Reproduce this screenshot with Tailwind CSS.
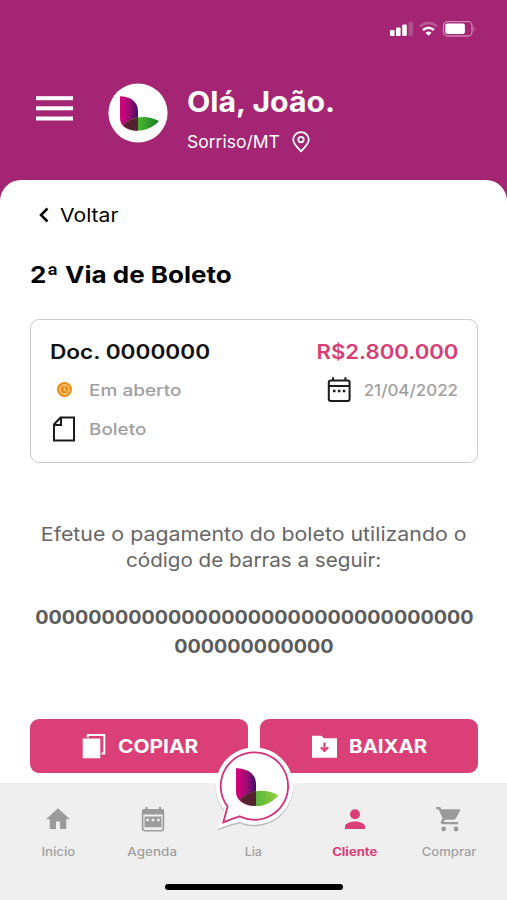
<!DOCTYPE html>
<html lang="pt-BR">
<head>
<meta charset="utf-8">
<meta name="viewport" content="width=device-width, initial-scale=1">
<title>2ª Via de Boleto</title>
<script src="https://cdn.jsdelivr.net/npm/@tailwindcss/browser@4"></script>
</head>
<body class="font-['Inter',sans-serif] bg-[#a32574]">
<div class="relative w-[507px] h-[900px] flex flex-col overflow-hidden whitespace-nowrap">
  <header class="h-[180px] shrink-0 flex flex-col text-white">
    <div class="h-[60px] pt-[20px] pr-[30px] flex justify-end">
      <svg class="w-[88px] h-[18px]" viewBox="0 0 88 18" fill="#fff">
        <rect x="1" y="10" width="4.6" height="6" rx="1"/><rect x="7" y="7.5" width="4.6" height="8.500" rx="1"/><rect x="13.200" y="4.500" width="4.600" height="11.500" rx="1"/><rect x="19.500" y="2" width="4.500" height="14" rx="1" opacity=".2"/>
        <g fill="none" stroke="#fff" stroke-width="2.500"><path d="M31 6.300Q39.500-.5 48 6.300" opacity=".25"/><path d="M34 10Q39.500 5.500 45 10"/></g>
        <path d="M36.500 12.700Q39.500 10.400 42.500 12.700L39.500 15.700z"/>
        <rect x="54.500" y="1.700" width="28.500" height="14.300" rx="4" fill="none" stroke="#fff" stroke-width="1.300" opacity=".45"/>
        <rect x="56.300" y="3.600" width="19.600" height="10.500" rx="2"/><path d="M84.500 6.500Q86.500 9 84.500 11.500z" opacity=".45"/>
      </svg>
    </div>
    <div class="flex pl-[36px]">
      <svg class="w-[37px] h-[25px] mt-[36px]" viewBox="0 0 37 25" fill="#fff"><rect y=".2" width="37" height="4"/><rect y="10.300" width="37" height="4"/><rect y="20.500" width="37" height="4"/></svg>
      <svg class="w-[60px] h-[60px] mt-[23px] ml-[35px]" viewBox="0 0 60 60">
        <defs>
          <linearGradient id="petal"><stop offset="0" stop-color="#d9007c"/><stop offset=".5" stop-color="#a40a73"/><stop offset="1" stop-color="#3d1069"/></linearGradient>
          <linearGradient id="leafDark"><stop offset="0" stop-color="#44a82c"/><stop offset=".5" stop-color="#45b02f"/><stop offset="1" stop-color="#167c28"/></linearGradient>
          <linearGradient id="leafLight"><stop offset=".4" stop-color="#58b53a"/><stop offset="1" stop-color="#94d03c"/></linearGradient>
        </defs>
        <circle cx="30" cy="30" r="29.600" fill="#fff"/>
        <path d="M12 13.300C21 13.300 30 18 30 28V47.500C19 48 12 43 12 35z" fill="url(#petal)"/>
        <path d="M15.500 42C24 34 37 31 51 38C44 45.500 36 48 29 47.500C23 47.500 18 45.500 15.500 42z" fill="url(#leafDark)"/>
        <path d="M15.500 42C20 38 25 35.600 30 35.100V47.500C23 47.500 18 45.500 15.500 42z" fill="#55202f"/>
      </svg>
      <div class="ml-[19px] mt-[24px]">
        <h1 class="text-[28px] leading-[36px] font-bold origin-left scale-x-[1.08]">Olá, João.</h1>
        <div class="flex items-center h-[24px] mt-[10px]">
          <span class="text-[17px] leading-[24px] w-[104px] origin-left scale-x-[1.03]">Sorriso/MT</span>
          <svg class="w-[20px] h-[22px]" viewBox="0 0 20 22" fill="none" stroke="#fff" stroke-width="1.800"><path d="M10 20.300C5 15.500 2.200 12 2.200 8.600a7.800 7.400 0 0 1 15.600 0C17.800 12 15 15.500 10 20.300z"/><circle cx="10" cy="8.600" r="2.700"/></svg>
        </div>
      </div>
    </div>
  </header>

  <main class="h-[603px] shrink-0 bg-white rounded-t-[21px] pl-[30px] pr-[29px] flex flex-col">
    <div class="mt-[23px] h-[24px] flex items-center pl-[8px] text-black">
      <svg class="w-[11px] h-[16px]" viewBox="0 0 11 16" fill="none" stroke="#000" stroke-width="2.500"><path d="M9.500 1.500L3 8L9.500 14.500"/></svg>
      <span class="ml-[11px] text-[18.500px] leading-[24px] origin-left scale-x-[1.14]">Voltar</span>
    </div>
    <h2 class="mt-[32px] text-[23px] leading-[32px] font-bold text-black origin-left scale-x-[1.13]">2ª Via de Boleto</h2>

    <section class="mt-[28px] h-[144px] rounded-[9px] border-[1.500px] border-[#cbcbcb] pl-[19px] pr-[19px] pt-[20px]">
      <div class="flex justify-between h-[24px] text-[20px] leading-[24px] font-semibold">
        <span class="text-[#111] origin-left scale-x-[1.13]">Doc. 0000000</span>
        <span class="text-[#d83e76] origin-right scale-x-[1.105]">R$2.800.000</span>
      </div>
      <div class="flex justify-between items-center mt-[14px] h-[24px] text-[16px] leading-[24px] font-medium text-[#a0a0a0]">
        <div class="flex items-center">
          <svg class="w-[39px] h-[24px]" viewBox="0 0 39 24" fill="none"><circle cx="14.500" cy="11.500" r="7.500" fill="#f08c14"/><circle cx="14.500" cy="11.500" r="4.600" stroke="#ffd9a0" stroke-width="1.100"/><path d="M14.300 8.800V11.800L16.400 13.300" stroke="#ffd9a0" stroke-width="1.100"/></svg>
          <span class="origin-left scale-x-[1.187]">Em aberto</span>
        </div>
        <div class="flex items-center">
          <svg class="w-[24px] h-[26px]" viewBox="0 0 24 26" fill="none" stroke="#1b1b1b" stroke-width="2"><rect x="1.800" y="3.500" width="20.800" height="20.500" rx="2"/><path d="M1.800 9H22.600M6 .3V4M18.400 .3V4"/><path d="M6 14H8.500M10.900 14H13.400M15.800 14H18.300" stroke-width="2.400"/></svg>
          <span class="ml-[18px] origin-right scale-x-[1.06]">21/04/2022</span>
        </div>
      </div>
      <div class="flex items-center mt-[15px] h-[24px] text-[16px] leading-[24px] font-medium text-[#a0a0a0]">
        <svg class="w-[39px] h-[26px]" viewBox="0 0 39 26" fill="none" stroke="#1b1b1b" stroke-width="2"><path d="M10.500 1.500H24V24.500H4V8.500z"/><path d="M11 1.500V9H4" /></svg>
        <span class="origin-left scale-x-[1.18]">Boleto</span>
      </div>
    </section>

    <div class="mt-[59px] flex flex-col items-center text-[19px] leading-[26px] text-[#666]">
      <span class="scale-x-[1.122]">Efetue o pagamento do boleto utilizando o</span>
      <span class="scale-x-[1.085]">código de barras a seguir:</span>
    </div>
    <div class="mt-[29px] flex flex-col items-center text-[19px] leading-[29px] font-bold text-[#5c5c5c]">
      <span class="scale-x-[1.037]">000000000000000000000000000000000</span>
      <span class="scale-x-[1.037]">000000000000</span>
    </div>

    <div class="mt-[58px] flex gap-[12px] text-white text-[19px] leading-[24px] font-bold">
      <button class="w-[218px] h-[54px] rounded-[9px] bg-[#da3f77] flex items-center pl-[52px]">
        <svg class="w-[24px] h-[26px]" viewBox="0 0 24 26" fill="#fff"><path d="M.7 5.500H18.300V25.300H.7z"/><path d="M5.800 4.500V1.900H22.300V20.500H19.500" fill="none" stroke="#fff" stroke-width="2"/></svg>
        <span class="ml-[12px] pt-[1px] origin-left scale-x-[1.1]">COPIAR</span>
      </button>
      <button class="w-[218px] h-[54px] rounded-[9px] bg-[#da3f77] flex items-center pl-[52px]">
        <svg class="w-[25px] h-[23px]" viewBox="0 0 25 23"><path d="M0 .8H9.500L12 3.300H25V22.800H0z" fill="#fff"/><path d="M12.500 7.500V15.500M8.800 12.200L12.500 16L16.200 12.200" fill="none" stroke="#da3f77" stroke-width="2.200"/></svg>
        <span class="ml-[12px] pt-[1px] origin-left scale-x-[1.075]">BAIXAR</span>
      </button>
    </div>
  </main>

  <nav class="h-[117px] shrink-0 bg-[#efefef] flex flex-col items-center text-[12px] leading-[16px] font-medium text-[#a0a0a0]">
    <div class="w-full h-[101px] pt-[20px] pl-[11px] pr-[11px] flex">
      <a class="w-[94px] flex flex-col items-center">
        <svg class="w-[28px] h-[32px]" viewBox="0 0 28 32" fill="#9b9b9b"><path d="M14 5.300L26 16.200H22.300V26H16V18.500H12V26H5.700V16.200H2z"/></svg>
        <span class="mt-[9px] scale-x-[1.1]">Início</span>
      </a>
      <a class="w-[95px] flex flex-col items-center">
        <svg class="w-[28px] h-[32px]" viewBox="0 0 28 32"><rect x="3.600" y="6.800" width="20.800" height="21" rx="2.500" fill="none" stroke="#9b9b9b" stroke-width="1.600"/><path d="M3 6.500H25V11.500H3zM6.500 4H8.500V8H6.500zM20 4H22V8H20zM5.500 13.500H22.500V24.300H5.500z" fill="#9b9b9b"/><path d="M7.300 17H9.900M12.700 17H15.300M18.100 17H20.700" stroke="#efefef" stroke-width="2.600"/></svg>
        <span class="mt-[9px] scale-x-[1.12]">Agenda</span>
      </a>
      <a class="w-[107px] flex flex-col items-center"><span class="mt-[41px] scale-x-[1.04]">Lia</span></a>
      <a class="w-[95px] flex flex-col items-center font-bold text-[#d83e76]">
        <svg class="w-[28px] h-[32px]" viewBox="0 0 28 32" fill="#da3f77"><circle cx="14" cy="11.300" r="5"/><path d="M4 26V23.500C4 20 10 18.500 14 18.500S24 20 24 23.500V26z"/></svg>
        <span class="mt-[9px] scale-x-[1.09]">Cliente</span>
      </a>
      <a class="w-[94px] flex flex-col items-center">
        <svg class="w-[28px] h-[32px]" viewBox="0 0 28 32" fill="#9b9b9b"><path d="M1.200 4H5.200L6.300 6.200H24.200Q25.800 6.300 25 8L20.800 15.500Q20.200 16.800 18.500 16.800H9.700L8.700 18.900H23.200V21.200H8Q5 20.800 6 18.300L7.600 15.300L3.600 6.300H1.200z"/><circle cx="8.700" cy="26" r="2.400"/><circle cx="21" cy="26" r="2.400"/></svg>
        <span class="mt-[9px] scale-x-[1.09]">Comprar</span>
      </a>
    </div>
    <div class="w-[178px] h-[6px] rounded-full bg-black"></div>
  </nav>

  <svg class="absolute left-[205px] top-[735px] w-[100px] h-[110px]" viewBox="0 0 100 110">
    <path d="M19 75A38.700 38.700 0 1 1 35 87Q24 89 12.700 94Q17 84 19 75z" fill="#000" opacity=".22" transform="translate(0 1.500)"/>
    <path d="M19 75A38.700 38.700 0 1 1 35 87Q24 89 12.700 94Q17 84 19 75z" fill="#fff"/>
    <path d="M22.600 71.500A33.700 33.700 0 1 1 34.500 81.300Q26 84 18.300 87.300Q20.500 79 22.600 71.500z" fill="#fff" stroke="#d4307c" stroke-width="1.800"/>
    <path d="M31 33.300C41 33.300 51 38 51 49V71C39 71.500 31 65 31 57z" fill="url(#petal)"/>
    <path d="M35 64.500C44 56 58 52 73.500 60.500C66 68.500 58 71.500 50 71C43 70.500 38 68.500 35 64.500z" fill="url(#leafLight)"/>
    <path d="M35 64.500C40 60 45 57.400 51 56.600V71C43 70.500 38 68.500 35 64.500z" fill="#55202f"/>
  </svg>
</div>
</body>
</html>
